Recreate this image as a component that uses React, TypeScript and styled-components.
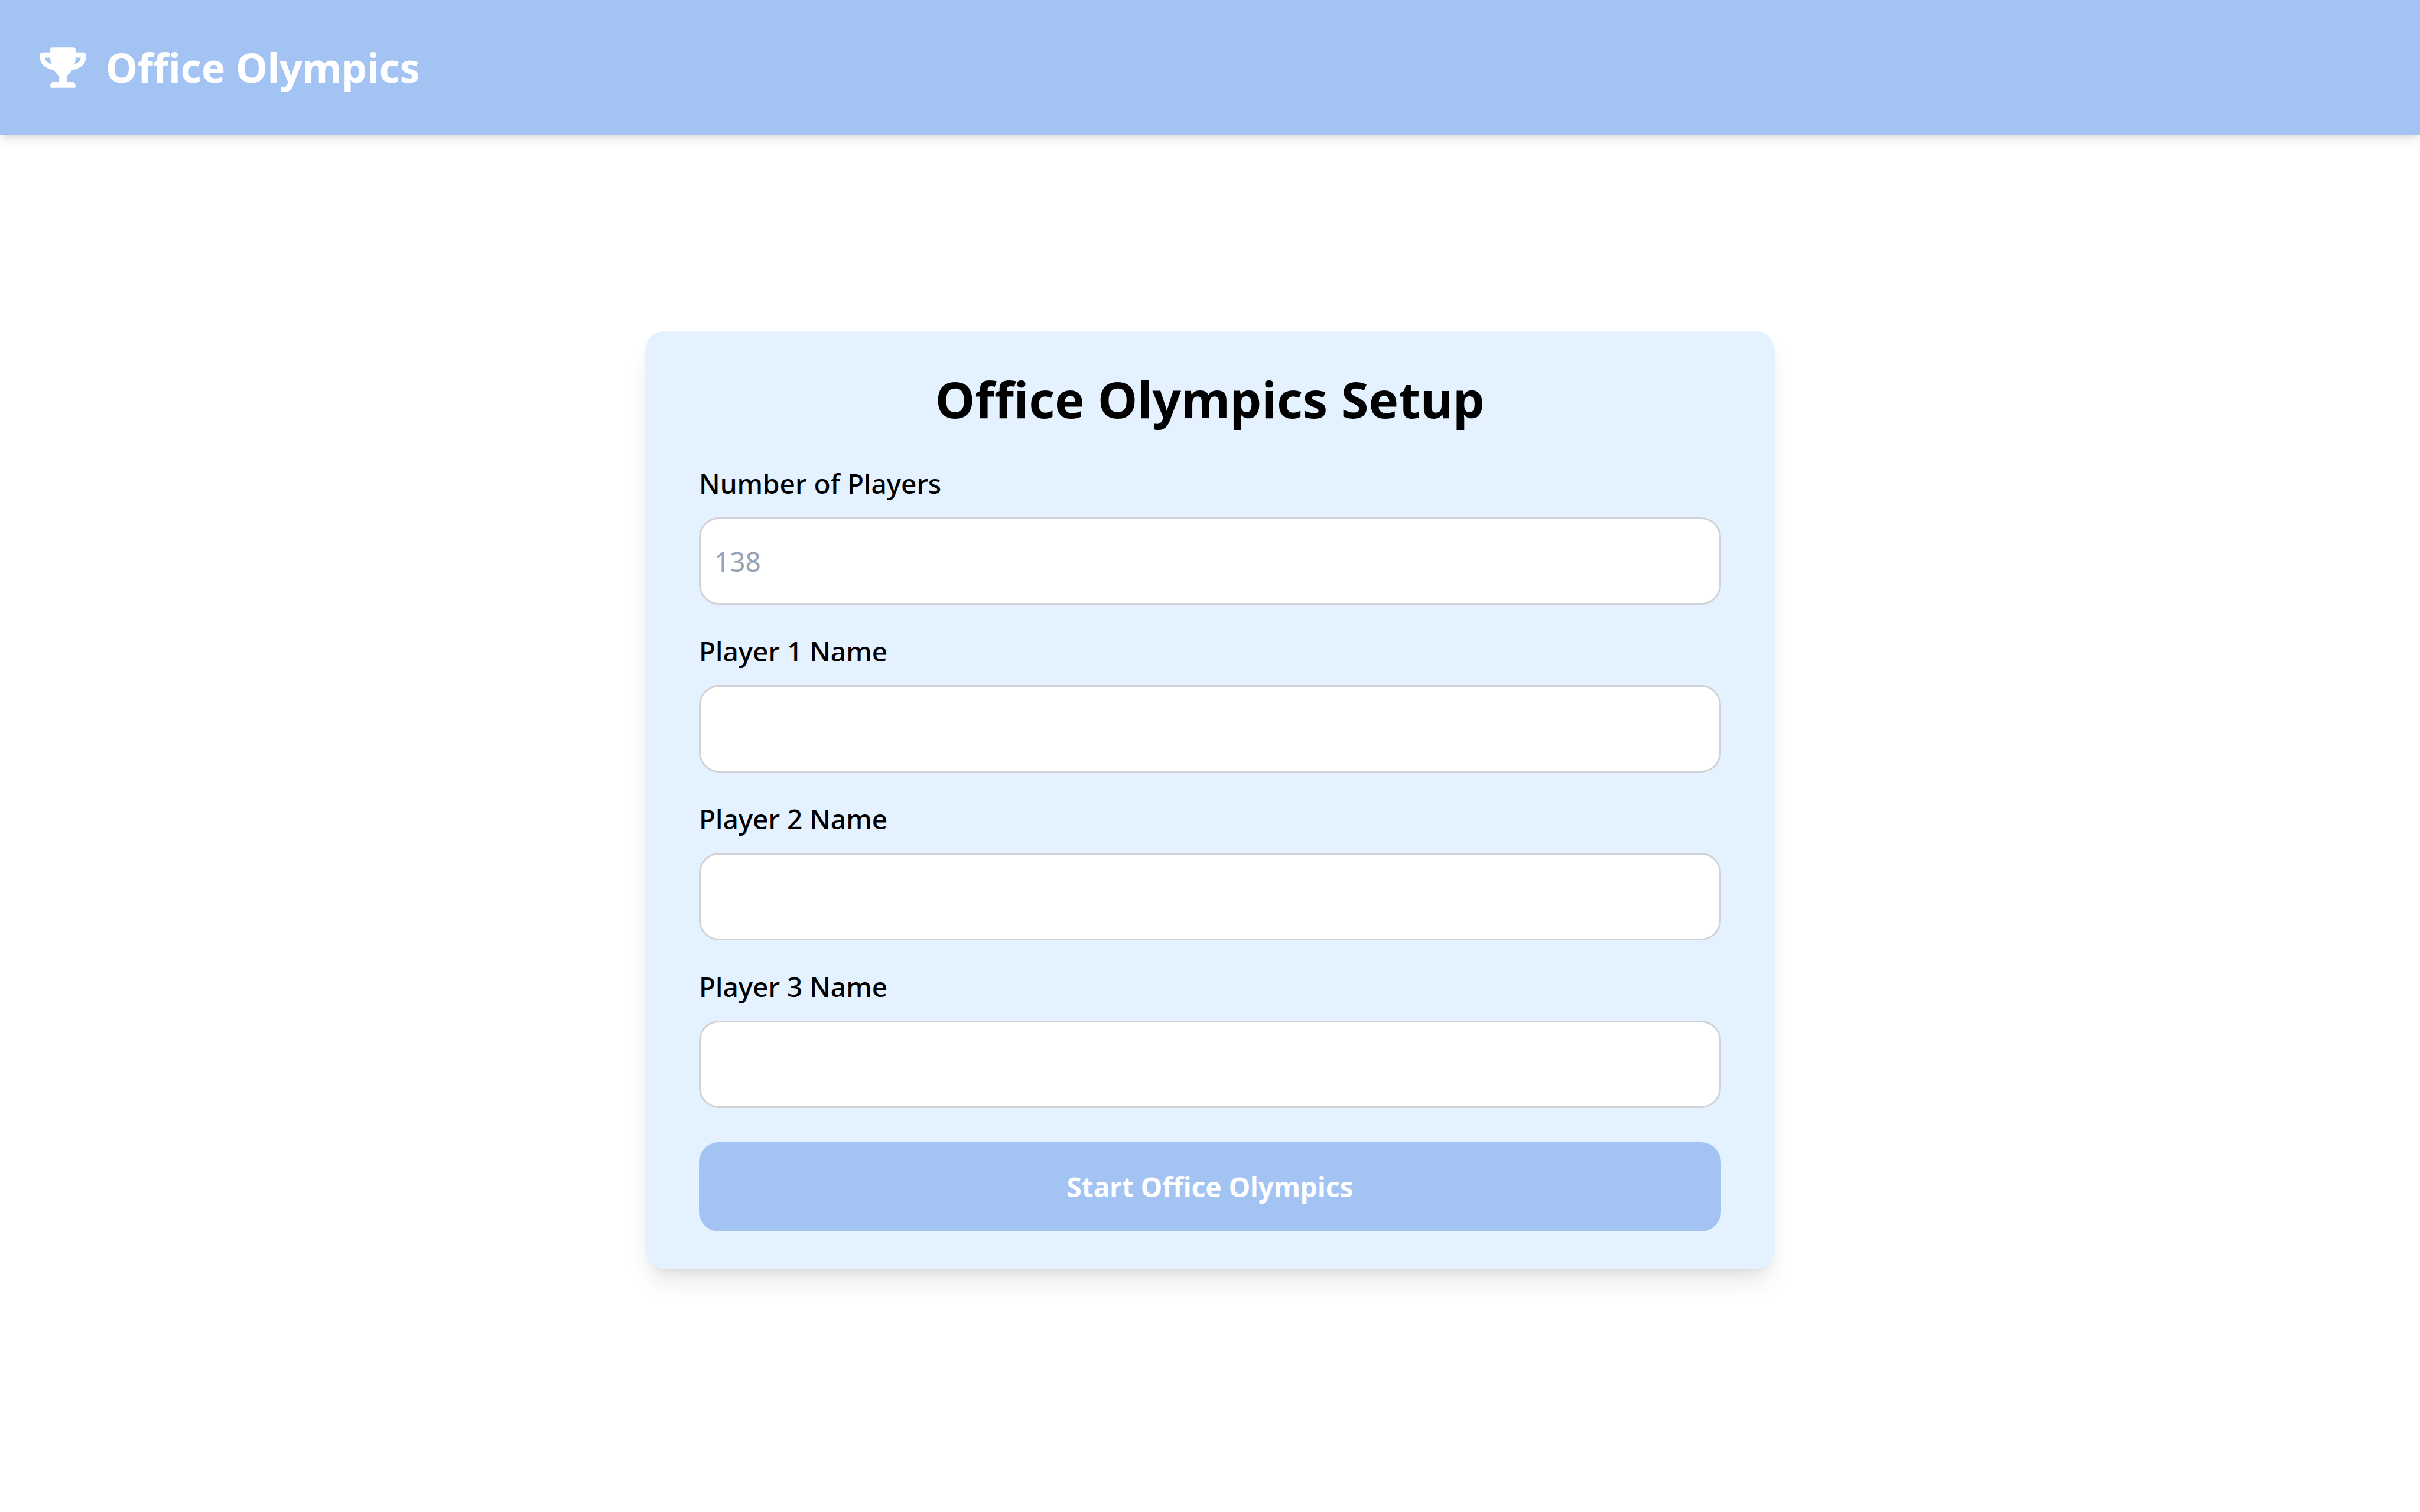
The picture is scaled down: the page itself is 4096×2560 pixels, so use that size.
import React, { useState } from "react";
import styled, { createGlobalStyle } from "styled-components";
import { FaTrophy } from "react-icons/fa";

const GlobalStyle = createGlobalStyle`
  *, *::before, *::after { box-sizing: border-box; }
  body {
    margin: 0;
    background: #ffffff;
    color: #000000;
    font-family: "Noto Sans", "Open Sans", sans-serif;
    font-size: 46px;
    line-height: 68px;
  }
`;

const Page = styled.div`
  min-height: 100vh;
  display: flex;
  flex-direction: column;
`;

const Header = styled.header`
  display: flex;
  align-items: center;
  gap: 34px;
  padding: 66px 68px;
  background: #a3c3f3;
  color: #ffffff;
  box-shadow: 0 11px 17px -3px rgba(0, 0, 0, 0.1), 0 6px 11px -6px rgba(0, 0, 0, 0.1);
`;

const TrophyIcon = styled(FaTrophy)`
  width: 77px;
  height: 69px;
`;

const Brand = styled.h1`
  margin: 0;
  font-size: 68px;
  line-height: 96px;
  font-weight: 700;
`;

const Main = styled.main`
  flex: 1;
  display: flex;
  flex-direction: column;
  align-items: center;
  justify-content: center;
  padding: 0 68px 80px;
`;

const Card = styled.section`
  width: 100%;
  max-width: 1912px;
  padding: 64px 91px;
  border-radius: 34px;
  background: #e4f1ff;
  box-shadow: 0 28px 43px -9px rgba(0, 0, 0, 0.1), 0 11px 17px -11px rgba(0, 0, 0, 0.1);
`;

const CardTitle = styled.h2`
  margin: 0 0 58px;
  font-size: 85px;
  line-height: 102px;
  font-weight: 700;
  text-align: center;
`;

const Fields = styled.div`
  display: flex;
  flex-direction: column;
  gap: 44px;
`;

const Field = styled.div`
  display: flex;
  flex-direction: column;
  gap: 24px;
`;

const Label = styled.label`
  font-weight: 500;
`;

const TextInput = styled.input`
  width: 100%;
  height: 148px;
  padding: 0 23px;
  border: 3px solid #d1d1d6;
  border-radius: 34px;
  background: #ffffff;
  color: #000000;
  font: inherit;

  &::placeholder {
    color: #94a3b8;
    opacity: 1;
  }
`;

const StartButton = styled.button`
  width: 100%;
  height: 151px;
  margin-top: 58px;
  border: 0;
  border-radius: 34px;
  background: #a3c3f3;
  color: #ffffff;
  font: inherit;
  font-weight: 700;
  cursor: pointer;
`;

const players = [1, 2, 3];

export default function App() {
  const [names, setNames] = useState<string[]>(players.map(() => ""));

  const rename = (index: number, value: string) =>
    setNames((current) => current.map((name, i) => (i === index ? value : name)));

  return (
    <Page>
      <GlobalStyle />
      <Header>
        <TrophyIcon aria-hidden="true" />
        <Brand>Office Olympics</Brand>
      </Header>
      <Main>
        <Card>
          <CardTitle>Office Olympics Setup</CardTitle>
          <form onSubmit={(event) => event.preventDefault()}>
            <Fields>
              <Field>
                <Label htmlFor="player-count">Number of Players</Label>
                <TextInput id="player-count" inputMode="numeric" placeholder="138" />
              </Field>
              {players.map((player, index) => (
                <Field key={player}>
                  <Label htmlFor={`player-${player}`}>{`Player ${player} Name`}</Label>
                  <TextInput
                    id={`player-${player}`}
                    type="text"
                    value={names[index]}
                    onChange={(event) => rename(index, event.target.value)}
                  />
                </Field>
              ))}
            </Fields>
            <StartButton type="submit">Start Office Olympics</StartButton>
          </form>
        </Card>
      </Main>
    </Page>
  );
}
